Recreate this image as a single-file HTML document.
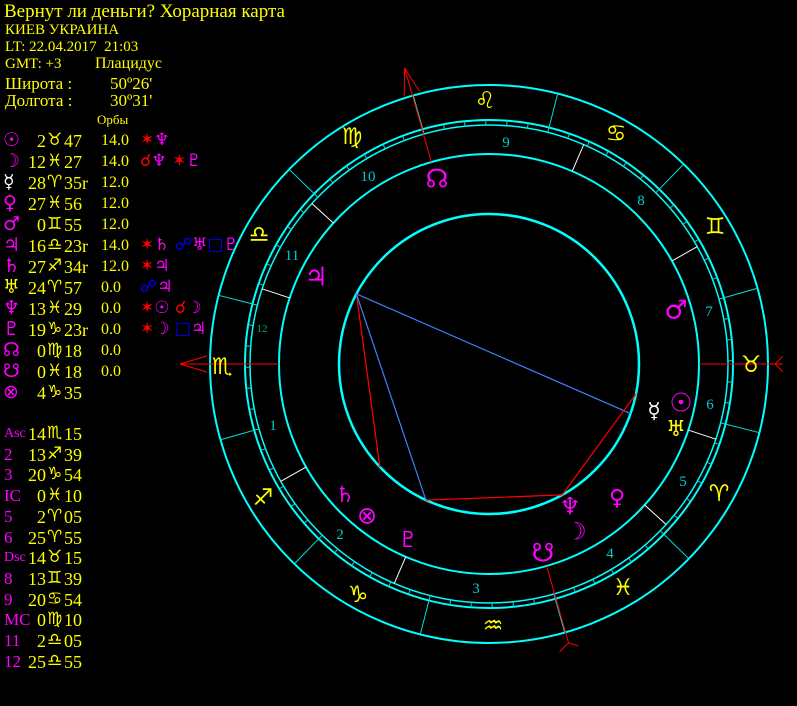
<!DOCTYPE html>
<html><head><meta charset="utf-8"><style>
html,body{margin:0;padding:0;background:#000;width:797px;height:706px;overflow:hidden}
body{position:relative;font-family:"Liberation Serif","DejaVu Serif",serif;color:#ffff00}
.t{position:absolute;white-space:nowrap;line-height:1}
.g{font-family:"DejaVu Sans",sans-serif}
.m{color:#ff00ff}.r{color:#ff0000}.b{color:#0000ff}.w{color:#fff}
svg{position:absolute;left:0;top:0}
</style></head><body>
<svg id="s" width="797" height="706" viewBox="0 0 797 706"></svg>
<div class="t" style="left:4px;top:2px;font-size:19px">Вернут ли деньги? Хорарная карта</div>
<div class="t" style="left:5px;top:23px;font-size:15px">КИЕВ УКРАИНА</div>
<div class="t" style="left:5px;top:40px;font-size:15px">LT: 22.04.2017&nbsp; 21:03</div>
<div class="t" style="left:5px;top:57px;font-size:15px">GMT: +3</div>
<div class="t" style="left:95px;top:56px;font-size:16px">Плацидус</div>
<div class="t" style="left:5px;top:75px;font-size:17px">Широта :</div>
<div class="t" style="left:110px;top:75px;font-size:17px">50º26'</div>
<div class="t" style="left:5px;top:92px;font-size:17px">Долгота :</div>
<div class="t" style="left:110px;top:92px;font-size:17px">30º31'</div>
<div class="t" style="left:97px;top:113px;font-size:13px">Орбы</div>
<div id="tbl"></div>
<script>
var S=document.getElementById('s'),NS='http://www.w3.org/2000/svg';
var cx=489,cy=364;
function el(n,a,txt){var e=document.createElementNS(NS,n);for(var k in a)e.setAttribute(k,a[k]);if(txt!==undefined)e.textContent=txt;S.appendChild(e);return e;}
function P(r,lon){var t=(lon-44.25)*Math.PI/180;return [cx+r*Math.cos(t),cy-r*Math.sin(t)];}
function L(r1,r2,lon,c,w){var a=P(r1,lon),b=P(r2,lon);el('line',{x1:a[0],y1:a[1],x2:b[0],y2:b[1],stroke:c,'stroke-width':w||1});}
[[279,2],[244,2],[239,1.5],[210,2],[150,2.5]].forEach(function(c){el('circle',{cx:cx,cy:cy,r:c[0],fill:'none',stroke:'#00ffff','stroke-width':c[1]});});
for(var l=0;l<360;l+=5){if(l%30==0)L(239,279,l,'#00e0e0',1);else L(239,244,l,'#00e0e0',1);}
var cusps=[224.25,253.65,290.9,330.17,2.08,25.92,44.25,73.65,110.9,150.17,182.08,205.92];
cusps.forEach(function(c,i){if(i%3!=0)L(210,239,c,'#fff',1);});
function arrow(lon,rt){L(210,rt,lon,'#ff0000',1);var t=(lon-44.25)*Math.PI/180,tip=P(rt,lon),bk=P(rt-27,lon);var nx=Math.sin(t),ny=Math.cos(t);
el('line',{x1:tip[0],y1:tip[1],x2:bk[0]+nx*8,y2:bk[1]+ny*8,stroke:'#ff0000','stroke-width':1});
el('line',{x1:tip[0],y1:tip[1],x2:bk[0]-nx*8,y2:bk[1]-ny*8,stroke:'#ff0000','stroke-width':1});}
arrow(224.25,309);arrow(150.17,308);
L(210,294,44.25,'#ff0000',1);var d=P(286,44.25);el('polyline',{points:(d[0]+8)+','+(d[1]-8)+' '+d[0]+','+d[1]+' '+(d[0]+8)+','+(d[1]+8),fill:'none',stroke:'#ff0000'});
L(210,290,330.17,'#ff0000',1);var e=P(290,330.17);el('polyline',{points:(e[0]-9)+','+(e[1]+9)+' '+e[0]+','+e[1]+' '+(e[0]+10)+','+(e[1]+3),fill:'none',stroke:'#ff0000'});
var pl={su:32.78,mo:342.45,ju:196.38,sa:267.57,ur:24.95,ne:343.48,pu:289.38};
function A(a,b,c){var p=P(150,pl[a]),q=P(150,pl[b]);el('line',{x1:p[0],y1:p[1],x2:q[0],y2:q[1],stroke:c,'stroke-width':1.2});}
A('ju','sa','#ff0000');A('ju','pu','#4080ff');A('ju','ur','#4080ff');A('pu','ne','#ff0000');A('ne','su','#ff0000');
[['♌',485,100],['♋',616,133],['♊',715,226],['♉',751,364],['♈',719,493],['♓',623,587],['♒',493,625],['♑',358,594],['♐',263,497],['♏',222,366],['♎',259,234],['♍',352,136]].forEach(function(g){el('text',{x:g[1],y:g[2]+8,'font-family':'DejaVu Sans','font-size':23,'font-weight':'bold',fill:'#ffff00','text-anchor':'middle'},g[0]);});
[['☉',681,402,'#ff00ff',26],['☿',654,410,'#fff',22],['♅',676,428,'#ffff00',22],['♂',676,309,'#ff00ff',26],['♀',617,497,'#ff00ff',22],['♆',570,506,'#ff00ff',24],['☽',576,531,'#ff00ff',24],['☋',543,552,'#ff00ff',26],['♇',408,539,'#ff00ff',22],['⊗',367,515,'#ff00ff',24],['♄',345,494,'#ff00ff',22],['♃',316,276,'#ff00ff',26],['☊',437,178,'#ff00ff',26]].forEach(function(g){el('text',{x:g[1],y:g[2]+g[4]*0.36,'font-family':'DejaVu Sans','font-size':g[4],fill:g[3],'text-anchor':'middle'},g[0]);});
[['10',368,175],['9',506,141],['8',641,199],['7',709,310],['6',710,403],['5',683,480],['4',610,552],['3',476,587],['2',340,533],['1',273,424],['11',292,254]].forEach(function(g){el('text',{x:g[1],y:g[2]+6,'font-family':'Liberation Serif','font-size':15,fill:'#00cccc','text-anchor':'middle'},g[0]);});
el('text',{x:262,y:332,'font-family':'Liberation Serif','font-size':11,fill:'#00aa88','text-anchor':'middle'},'12');
var T=document.getElementById('tbl'),h='';
var rows=[['☉','m','2','♉','47','14.0','<span class="r">✶</span><span class="m">♆</span>'],
['☽','m','12','♓','27','14.0','<span class="r">☌</span><span class="m">♆</span> <span class="r">✶</span><span class="m">♇</span>'],
['☿','w','28','♈','35r','12.0',''],
['♀','m','27','♓','56','12.0',''],
['♂','m','0','♊','55','12.0',''],
['♃','m','16','♎','23r','14.0','<span class="r">✶</span><span class="m">♄</span> <span class="b">☍</span><span class="m">♅</span><span class="b">□</span><span class="m">♇</span>'],
['♄','m','27','♐','34r','12.0','<span class="r">✶</span><span class="m">♃</span>'],
['♅','','24','♈','57','0.0','<span class="b">☍</span><span class="m">♃</span>'],
['♆','m','13','♓','29','0.0','<span class="r">✶</span><span class="m">☉</span> <span class="r">☌</span><span class="m">☽</span>'],
['♇','m','19','♑','23r','0.0','<span class="r">✶</span><span class="m">☽</span> <span class="b">□</span><span class="m">♃</span>'],
['☊','m','0','♍','18','0.0',''],
['☋','m','0','♓','18','0.0',''],
['⊗','m','4','♑','35','','']];
rows.forEach(function(r,i){var y=132+i*21;
h+='<div class="t g '+r[1]+'" style="left:3px;top:'+(y-1)+'px;font-size:19px">'+r[0]+'</div>';
h+='<div class="t" style="left:0;width:46px;text-align:right;top:'+y+'px;font-size:18px">'+r[2]+'</div>';
h+='<div class="t g" style="left:47px;top:'+(y)+'px;font-size:17px;font-weight:bold">'+r[3]+'</div>';
h+='<div class="t" style="left:64px;top:'+y+'px;font-size:18px">'+r[4]+'</div>';
h+='<div class="t" style="left:101px;top:'+(y+1)+'px;font-size:16px">'+r[5]+'</div>';
h+='<div class="t g" style="left:140px;top:'+(y)+'px;font-size:17px">'+r[6]+'</div>';});
var hs=[['Asc','14','♏','15'],['2','13','♐','39'],['3','20','♑','54'],['IC','0','♓','10'],['5','2','♈','05'],['6','25','♈','55'],['Dsc','14','♉','15'],['8','13','♊','39'],['9','20','♋','54'],['MC','0','♍','10'],['11','2','♎','05'],['12','25','♎','55']];
hs.forEach(function(r,i){var y=425+i*20.7;
var fs=r[0].length==3?14:17;
h+='<div class="t m" style="left:4px;top:'+(y+(fs==14?2:0))+'px;font-size:'+fs+'px">'+r[0]+'</div>';
h+='<div class="t" style="left:0;width:46px;text-align:right;top:'+y+'px;font-size:18px">'+r[1]+'</div>';
h+='<div class="t g" style="left:47px;top:'+(y)+'px;font-size:17px;font-weight:bold">'+r[2]+'</div>';
h+='<div class="t" style="left:64px;top:'+y+'px;font-size:18px">'+r[3]+'</div>';});
T.innerHTML=h;
</script>
</body></html>
